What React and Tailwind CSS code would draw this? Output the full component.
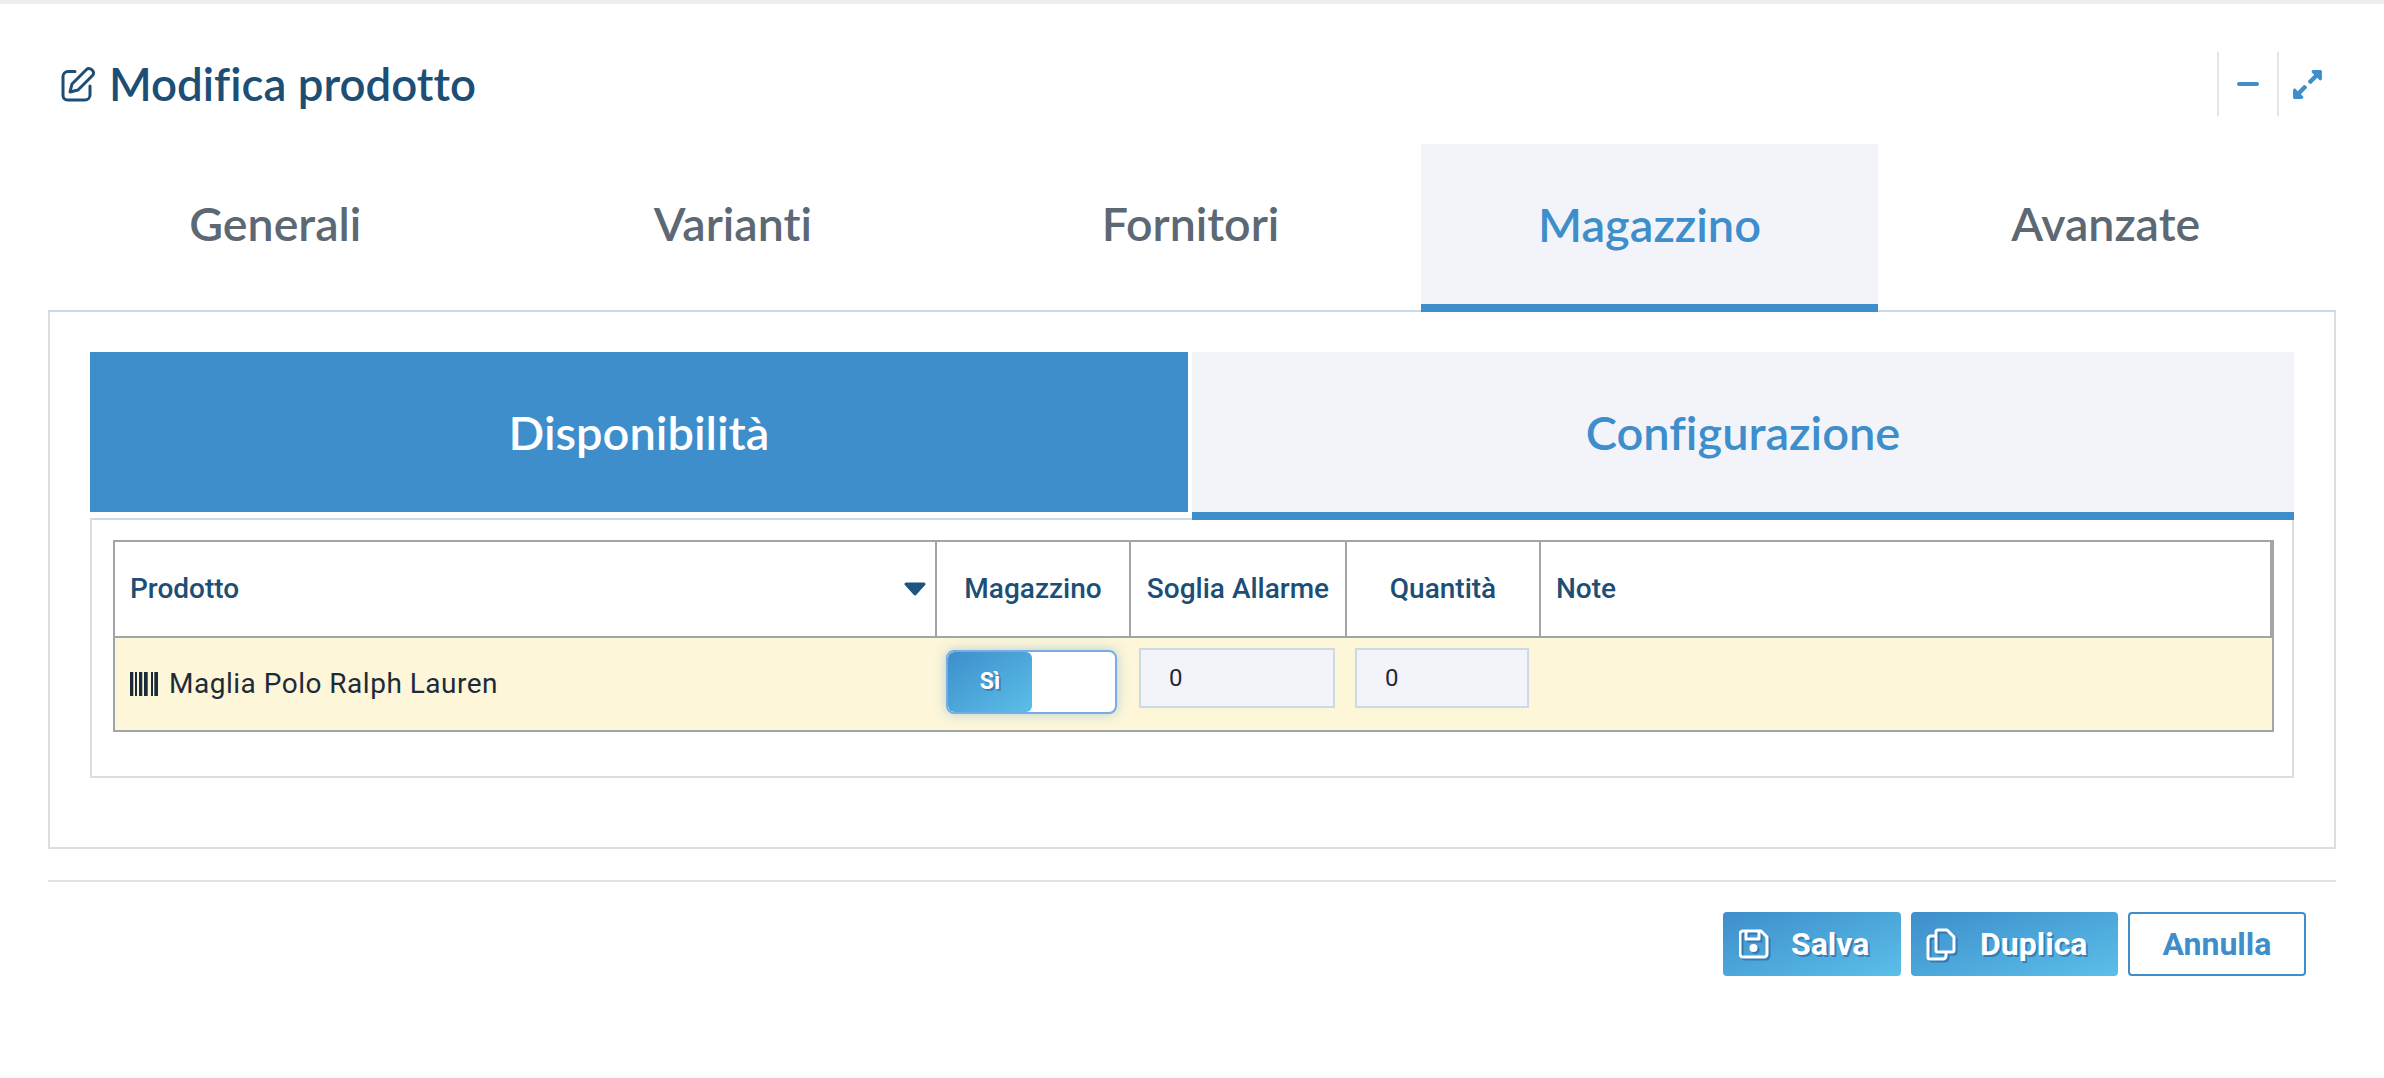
import { FaExpandAlt } from 'react-icons/fa';

const TITLE = "font-['Lato','Open_Sans',sans-serif] [font-variant-ligatures:none]";
const BODY = "font-['Roboto','Liberation_Sans',sans-serif]";

const TABS = ['Generali', 'Varianti', 'Fornitori', 'Magazzino', 'Avanzate'];

const EditIcon = () => (
  <svg width="35" height="36" viewBox="0 0 35 36" fill="none" stroke="currentColor" strokeWidth="3" strokeLinecap="round" strokeLinejoin="round" className="shrink-0">
    <path d="M14 5.5H7a5 5 0 0 0-5 5V29.500a4.500 4.500 0 0 0 4.500 4.500H24a5 5 0 0 0 5-5V20" />
    <path d="M9 26l2-8L25.500 3.500a3.500 3.500 0 0 1 5 0l1 1a3.500 3.500 0 0 1 0 5L17 24z" />
  </svg>
);

const Barcode = () => (
  <svg width="28" height="24" viewBox="0 0 28 24" className="shrink-0 text-[#1c2b3a]" fill="currentColor">
    <rect x="0" y="0" width="3.300" height="24" />
    <rect x="5" y="0" width="2" height="24" />
    <rect x="9" y="0" width="3.300" height="24" />
    <rect x="14" y="0" width="3.700" height="24" />
    <rect x="21" y="0" width="2" height="24" />
    <rect x="24.300" y="0" width="3.700" height="24" />
  </svg>
);

const SaveIcon = () => (
  <svg width="30" height="30" viewBox="0 0 30 30" fill="none" stroke="currentColor" strokeWidth="3" strokeLinejoin="round" className="shrink-0 drop-shadow-[2px_2px_0_rgba(30,90,150,0.55)]">
    <path d="M4 2h18l6 6v17a3 3 0 0 1-3 3H4a3 3 0 0 1-3-3V5a3 3 0 0 1 3-3z" />
    <path d="M7 2v8h13V2" />
    <circle cx="14.500" cy="19" r="4" fill="currentColor" stroke="none" />
  </svg>
);

const CopyIcon = () => (
  <svg width="30" height="33" viewBox="0 0 30 33" fill="none" stroke="currentColor" strokeWidth="3" strokeLinejoin="round" className="shrink-0 drop-shadow-[2px_2px_0_rgba(30,90,150,0.55)]">
    <path d="M12 2h9l7 7v13a2 2 0 0 1-2 2H12a2 2 0 0 1-2-2V4a2 2 0 0 1 2-2z" />
    <path d="M10 8H5a3 3 0 0 0-3 3v18a2 2 0 0 0 2 2h13a3 3 0 0 0 3-3v-4" />
  </svg>
);

const SortCaret = () => (
  <svg width="22" height="14" viewBox="0 0 22 14" className="shrink-0">
    <path d="M2 2h18L11 12z" fill="#1f5580" stroke="#1f5580" strokeWidth="3" strokeLinejoin="round" />
  </svg>
);

const Head = ({ children, center, className }) => (
  <div className={`flex h-[94px] items-center border-r-2 border-[#a0a5a8] text-[28px] font-medium text-[#1d4e75] ${center ? 'justify-center' : 'pl-[15px]'} ${className || ''}`}>
    {children}
  </div>
);

const Cell = ({ value, width }) => (
  <div className="pl-[8px] pt-[10px]">
    <input
      readOnly
      value={value}
      className={`${width} h-[60px] border-2 border-[#ccd9e6] bg-[#f3f4f9] pl-[28px] text-[24px] text-[#1c2b3a] outline-none`}
    />
  </div>
);

export default function App() {
  return (
    <div className={`h-screen w-full overflow-hidden bg-white ${BODY}`}>
      <div className="h-[4px] bg-[#eeeeee]" />

      {/* testata */}
      <div className="flex h-[140px] items-start pl-[61px] pr-[48px] pt-[48px]">
        <div className={`flex h-[64px] flex-1 items-center gap-[13px] text-[45.600px] font-semibold text-[#1d4e75] ${TITLE}`}>
          <EditIcon />
          <span>Modifica prodotto</span>
        </div>
        <div className="flex h-[64px] items-stretch text-[#3e8ecb]">
          <div className="flex w-[60px] items-center justify-center border-l-2 border-[#e5e5e5]">
            <div className="h-[4px] w-[22px] rounded-full bg-[#3e8ecb]" />
          </div>
          <div className="flex w-[59px] items-center justify-center border-l-2 border-[#e5e5e5]">
            <FaExpandAlt size={33} />
          </div>
        </div>
      </div>

      <div className="mx-[48px]">
        {/* tab principali */}
        <div className={`relative z-10 -mb-[2px] grid h-[168px] grid-cols-5 font-semibold ${TITLE}`}>
          {TABS.map(t => (
            <div
              key={t}
              className={t === 'Magazzino'
                ? 'flex items-center justify-center border-b-[8px] border-[#3e8ecb] bg-[#f3f4f9] text-[47px] text-[#3e8ecb]'
                : 'flex items-center justify-center pb-[8px] pr-[3px] text-[46.500px] text-[#5c6873]'}>
              {t}
            </div>
          ))}
        </div>

        <div className="h-[539px] border-2 border-[#dddddd] border-t-[#ccd9e6] px-[40px] pt-[40px]">
          {/* tab interni */}
          <div className={`relative z-10 flex h-[168px] gap-[4px] text-[47px] font-semibold ${TITLE}`}>
            <div className="flex h-[160px] w-[1098px] items-center justify-center bg-[#3e8ecb] text-white">
              Disponibilità
            </div>
            <div className="flex flex-1 items-center justify-center border-b-[8px] border-[#3e8ecb] bg-[#f3f4f9] text-[#3e8ecb]">
              Configurazione
            </div>
          </div>

          <div className="-mt-[2px] h-[260px] border-2 border-[#dddddd] border-t-[#ccd9e6] pl-[21px] pr-[18px] pt-[20px]">
            <div className="border-2 border-[#a0a5a8]">
              <div className="grid grid-cols-[822px_194px_216px_194px_1fr] border-b-2 border-[#a0a5a8]">
                <Head className="justify-between pr-[9px]">
                  <span>Prodotto</span>
                  <SortCaret />
                </Head>
                <Head center>Magazzino</Head>
                <Head center>Soglia Allarme</Head>
                <Head center>Quantità</Head>
                <Head className="border-r-0">Note</Head>
              </div>
              <div className="grid h-[92px] grid-cols-[822px_194px_216px_194px_1fr] bg-[#fdf6d8]">
                <div className="flex items-center gap-[11px] pl-[15px] text-[28px] tracking-[0.5px] text-[#1c2b3a]">
                  <Barcode />
                  <span>Maglia Polo Ralph Lauren</span>
                </div>
                <div className="pl-[9px] pt-[12px]">
                  <div className="flex h-[64px] w-[171px] overflow-hidden rounded-[8px] border-2 border-[#7aabe3] bg-white shadow-[0_0_12px_rgba(91,160,220,0.45)]">
                    <div className="flex w-[84px] items-center justify-center rounded-[6px] bg-gradient-to-br from-[#3e8ecb] to-[#5bbfe8] text-[23px] font-bold text-white [text-shadow:2px_2px_0_rgba(30,90,150,0.5)]">
                      Sì
                    </div>
                  </div>
                </div>
                <Cell value="0" width="w-[196px]" />
                <Cell value="0" width="w-[174px]" />
                <div />
              </div>
            </div>
          </div>
        </div>

        <div className="mt-[31px] h-[2px] bg-[#e4e4e4]" />

        {/* azioni */}
        <div className="mt-[30px] flex justify-end gap-[10px] pr-[30px] text-[32px] font-bold">
          <button className="flex h-[64px] w-[178px] items-center gap-[22px] rounded-[4px] bg-gradient-to-br from-[#3e8ecb] to-[#5bbfe8] pl-[16px] text-white [text-shadow:2px_2px_0_rgba(30,90,150,0.55)]">
            <SaveIcon />
            <span>Salva</span>
          </button>
          <button className="flex h-[64px] w-[207px] items-center gap-[24px] rounded-[4px] bg-gradient-to-br from-[#3e8ecb] to-[#5bbfe8] pl-[15px] text-white [text-shadow:2px_2px_0_rgba(30,90,150,0.55)]">
            <CopyIcon />
            <span>Duplica</span>
          </button>
          <button className="flex h-[64px] w-[178px] items-center justify-center rounded-[4px] border-2 border-[#3e8ecb] bg-white text-[#3e8ecb]">
            Annulla
          </button>
        </div>
      </div>
    </div>
  );
}
